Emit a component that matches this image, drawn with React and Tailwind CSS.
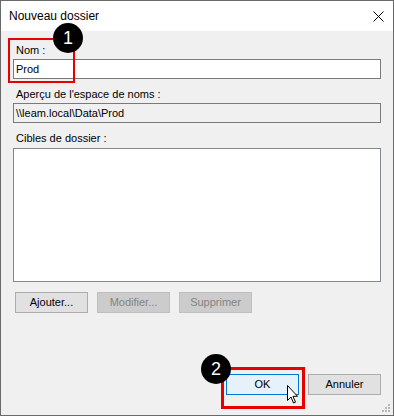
import React from 'react';

const font = { fontFamily: '"Liberation Sans", Arial, sans-serif' };

const Badge = ({ n, className }) => (
    <div className={`absolute flex h-[30px] w-[30px] items-center justify-center rounded-full bg-black text-[18px] font-medium leading-none text-white ${className}`}>
        {n}
    </div>
);

const Btn = ({ children, disabled, primary, className = '' }) => {
    let look = 'bg-[#e1e1e1] border-[#adadad] text-black';
    if (disabled) look = 'bg-[#cccccc] border-[#bfbfbf] text-[#838383]';
    if (primary) look = 'bg-[#e5f1fb] border-[#0078d7] text-black';
    return (
        <div className={`flex h-[21px] w-[73px] items-center justify-center border text-[11px] ${look} ${className}`}>
            {children}
        </div>
    );
};

const Label = ({ children, className = '' }) => (
    <div className={`pl-[3px] text-[11px] leading-[13px] text-black ${className}`}>{children}</div>
);

export default function App() {
    return (
        <div className="relative flex h-[416px] w-[394px] flex-col border border-[#6a6a6a] bg-[#f0f0f0]" style={font}>
            {/* title bar */}
            <div className="flex h-[30px] items-center justify-between bg-white pl-[8px] pr-[9px]">
                <span className="text-[12px] text-black">Nouveau dossier</span>
                <svg width="11" height="11" viewBox="0 0 11 11" className="mt-[1px]">
                    <path d="M0.5 0.5 L10.5 10.5 M10.5 0.5 L0.5 10.5" stroke="#000" strokeWidth="1" />
                </svg>
            </div>

            {/* body */}
            <div className="flex flex-1 flex-col px-[12px] pt-[13px] pb-[20px]">
                <Label>Nom :</Label>
                <div className="mt-[2px] flex h-[20px] items-center border border-[#7a7a7a] bg-white pl-[2px] text-[11px] text-black">
                    Prod
                </div>

                <Label className="mt-[9px]">Aperçu de l'espace de noms :</Label>
                <div className="mt-[2px] flex h-[20px] items-center border border-[#7a7a7a] bg-[#f0f0f0] pl-[2px] text-[11px] text-black">
                    \\leam.local\Data\Prod
                </div>

                <Label className="mt-[9px]">Cibles de dossier :</Label>
                <div className="mt-[3px] h-[134px] border border-[#828790] bg-white" />

                <div className="mt-[10px] flex gap-[9px] pl-[2px]">
                    <Btn>Ajouter...</Btn>
                    <Btn disabled>Modifier...</Btn>
                    <Btn disabled>Supprimer</Btn>
                </div>

                <div className="mt-auto flex justify-end gap-[9px] pr-[0px]">
                    <Btn primary>OK</Btn>
                    <Btn>Annuler</Btn>
                </div>
            </div>

            {/* annotations */}
            <div className="absolute left-[7px] top-[37px] h-[45px] w-[67px] border-2 border-[#e60000]" />
            <div className="absolute left-[220px] top-[366px] h-[42px] w-[84px] border-[3px] border-[#e60000]" />
            <Badge n="1" className="left-[52px] top-[22px]" />
            <Badge n="2" className="left-[200px] top-[353px]" />

            {/* cursor */}
            <svg className="absolute left-[285px] top-[383px]" width="13" height="21" viewBox="0 0 13 21">
                <path d="M1.5 1.5 L1.5 16.5 L5 13 L7.5 19 L9.5 18.2 L7 12.3 L11.5 12.3 Z" fill="#fff" stroke="#000" strokeWidth="1" strokeLinejoin="miter" />
            </svg>

            {/* resize grip */}
            <svg className="absolute right-[2px] bottom-[2px]" width="9" height="9" viewBox="0 0 9 9">
                <g fill="#b8b8b8">
                    <rect x="6" y="0" width="2" height="2" />
                    <rect x="3" y="3" width="2" height="2" />
                    <rect x="6" y="3" width="2" height="2" />
                    <rect x="0" y="6" width="2" height="2" />
                    <rect x="3" y="6" width="2" height="2" />
                    <rect x="6" y="6" width="2" height="2" />
                </g>
            </svg>
        </div>
    );
}
